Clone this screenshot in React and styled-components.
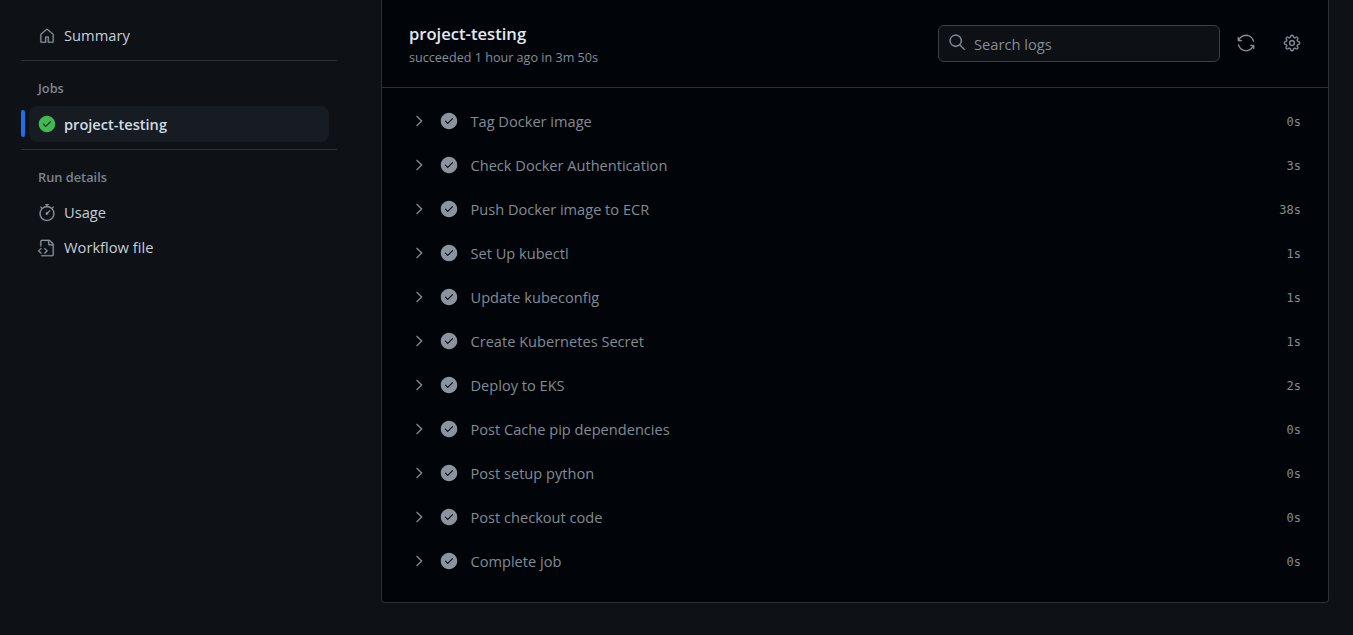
import React from 'react';
import styled, { createGlobalStyle } from 'styled-components';
import {
  GoHome,
  GoStopwatch,
  GoFileCode,
  GoSearch,
  GoSync,
  GoGear,
  GoChevronRight,
  GoCheckCircleFill
} from 'react-icons/go';

const steps = [
  ['Tag Docker image', '0s'],
  ['Check Docker Authentication', '3s'],
  ['Push Docker image to ECR', '38s'],
  ['Set Up kubectl', '1s'],
  ['Update kubeconfig', '1s'],
  ['Create Kubernetes Secret', '1s'],
  ['Deploy to EKS', '2s'],
  ['Post Cache pip dependencies', '0s'],
  ['Post setup python', '0s'],
  ['Post checkout code', '0s'],
  ['Complete job', '0s']
];

const GlobalStyle = createGlobalStyle`
  html, body {
    margin: 0;
    height: 100%;
    overflow: hidden;
    background: #0d1117;
  }
`;

const Page = styled.div`
  display: flex;
  align-items: flex-start;
  width: 1353px;
  height: 635px;
  overflow: hidden;
  background: #0e1116;
  font-family: 'Open Sans', 'Noto Sans', sans-serif;
`;

const Sidebar = styled.aside`
  width: 316px;
  margin-left: 21px;
  margin-right: 44px;
  flex: none;
`;

const NavRow = styled.div`
  display: flex;
  align-items: center;
  gap: 8px;
  height: 35px;
  padding-left: 17px;
  color: #c6ced6;
  font-size: 14.7px;
  font-weight: 500;
  line-height: 33px;
  svg {
    flex: none;
    width: 18px;
    height: 18px;
    color: #8b949e;
    stroke: currentColor;
    stroke-width: 0.3;
  }
`;

const FirstGroup = styled.div`
  padding-top: 18px;
  padding-bottom: 7px;
  border-bottom: 1px solid #2c3137;
`;

const JobGroup = styled.div`
  padding-top: 18px;
  padding-bottom: 7px;
  border-bottom: 1px solid #2c3137;
`;

const DetailGroup = styled.div`
  padding-top: 18px;
`;

const GroupLabel = styled.div`
  padding-left: 17px;
  color: #7d858e;
  font-size: 12.8px;
  font-weight: 600;
  line-height: 18px;
`;

const JobSlot = styled.div`
  position: relative;
  margin-top: 9px;
  margin-left: 8px;
  margin-right: 8px;
`;

const ActiveBar = styled.span`
  position: absolute;
  left: -8px;
  top: 4px;
  width: 4px;
  height: 27px;
  border-radius: 2px;
  background: #1f6feb;
`;

const JobRow = styled.div`
  display: flex;
  align-items: center;
  gap: 8px;
  height: 36px;
  padding-left: 9px;
  border-radius: 8px;
  background: #171b22;
  color: #d3dae1;
  font-size: 14.6px;
  font-weight: 600;
  line-height: 34px;
`;

const GreenCheck = styled(GoCheckCircleFill)`
  flex: none;
  width: 18px;
  height: 18px;
  color: #3fb950;
  background: radial-gradient(circle, #0d1117 45%, transparent 46%);
  border-radius: 50%;
`;

const UsageGroup = styled.div`
  margin-top: 9px;
`;

const Panel = styled.main`
  flex: none;
  box-sizing: border-box;
  width: 948px;
  height: 603px;
  background: #010409;
  border: 1px solid #2c3137;
  border-top: 0;
  border-radius: 0 0 4px 4px;
`;

const PanelHeader = styled.header`
  display: flex;
  align-items: center;
  box-sizing: border-box;
  height: 88px;
  padding: 0 27px 0 27px;
  border-bottom: 1px solid #2c3137;
`;

const HeadingBlock = styled.div`
  flex: 1;
  margin-top: 1px;
`;

const JobTitle = styled.div`
  color: #e3e8ed;
  font-size: 16.6px;
  font-weight: 600;
  line-height: 24px;
`;

const JobMeta = styled.div`
  margin-top: 3px;
  color: #868e97;
  font-size: 12.6px;
  line-height: 18px;
`;

const SearchBox = styled.div`
  display: flex;
  align-items: center;
  gap: 8px;
  box-sizing: border-box;
  width: 282px;
  height: 37px;
  margin-top: -1px;
  padding-left: 9px;
  padding-top: 2px;
  border: 1px solid #3b4047;
  border-radius: 6px;
  background: #0d1014;
  color: #858c94;
  font-size: 14.7px;
  svg {
    flex: none;
    width: 18px;
    height: 18px;
    margin-top: -4px;
    color: #8b949e;
    stroke: currentColor;
    stroke-width: 0.3;
  }
`;

const ToolIcon = styled.span`
  display: flex;
  margin-left: ${(p) => p.$gap}px;
  margin-top: -2px;
  color: #8b949e;
  svg {
    width: 18px;
    height: 18px;
    stroke: currentColor;
    stroke-width: 0.3;
  }
`;

const StepList = styled.div`
  padding-top: 11px;
`;

const StepRow = styled.div`
  display: flex;
  align-items: center;
  height: 44px;
  padding: 0 27px 0 28px;
`;

const Chevron = styled(GoChevronRight)`
  flex: none;
  width: 18px;
  height: 18px;
  margin-top: -1px;
  color: #8b949e;
  stroke: currentColor;
  stroke-width: 0.3;
`;

const StepCheck = styled(GoCheckCircleFill)`
  flex: none;
  width: 18px;
  height: 18px;
  margin-left: 12px;
  margin-top: -1px;
  color: #8b949e;
`;

const StepName = styled.span`
  flex: 1;
  margin-left: 12.5px;
  color: #838b94;
  font-size: 14.6px;
`;

const StepTime = styled.span`
  margin-top: 1px;
  color: #838b94;
  font-family: 'DejaVu Sans Mono', 'Liberation Mono', monospace;
  font-size: 12px;
  line-height: 14px;
`;

export default function App() {
  return (
    <Page>
      <GlobalStyle />
      <Sidebar>
        <FirstGroup>
          <NavRow>
            <GoHome />
            Summary
          </NavRow>
        </FirstGroup>
        <JobGroup>
          <GroupLabel>Jobs</GroupLabel>
          <JobSlot>
            <ActiveBar />
            <JobRow>
              <GreenCheck />
              project-testing
            </JobRow>
          </JobSlot>
        </JobGroup>
        <DetailGroup>
          <GroupLabel>Run details</GroupLabel>
          <UsageGroup>
            <NavRow>
              <GoStopwatch />
              Usage
            </NavRow>
            <NavRow>
              <GoFileCode />
              Workflow file
            </NavRow>
          </UsageGroup>
        </DetailGroup>
      </Sidebar>
      <Panel>
        <PanelHeader>
          <HeadingBlock>
            <JobTitle>project-testing</JobTitle>
            <JobMeta>succeeded 1 hour ago in 3m 50s</JobMeta>
          </HeadingBlock>
          <SearchBox>
            <GoSearch />
            Search logs
          </SearchBox>
          <ToolIcon $gap={17}>
            <GoSync />
          </ToolIcon>
          <ToolIcon $gap={28}>
            <GoGear />
          </ToolIcon>
        </PanelHeader>
        <StepList>
          {steps.map(([name, time]) => (
            <StepRow key={name}>
              <Chevron />
              <StepCheck />
              <StepName>{name}</StepName>
              <StepTime>{time}</StepTime>
            </StepRow>
          ))}
        </StepList>
      </Panel>
    </Page>
  );
}
